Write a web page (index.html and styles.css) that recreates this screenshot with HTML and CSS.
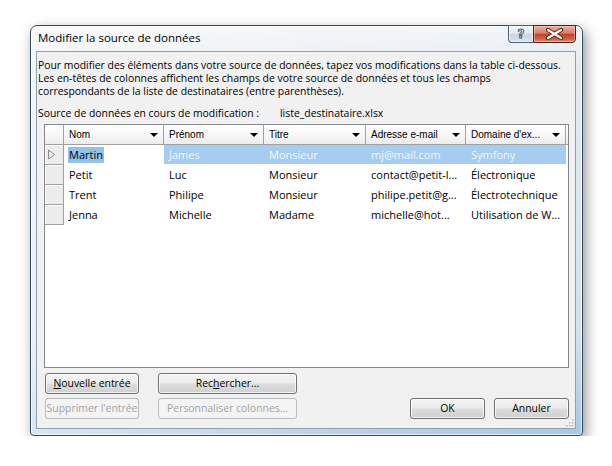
FILE: index.html
```html
<!DOCTYPE html>
<html lang="fr">
<head>
<meta charset="utf-8">
<title>Modifier la source de données</title>
<link rel="stylesheet" href="styles.css">
</head>
<body>
<div class="window">
  <div class="titlebar">
    <span class="title">Modifier la source de données</span>
    <div class="caption">
      <div class="cbtn help"><span>?</span></div>
      <div class="cbtn close">
        <svg width="41" height="16" viewBox="0 0 41 16">
          <path d="M14 4 L27 12 M27 4 L14 12" stroke="#5a1e14" stroke-width="4.4" stroke-linecap="round"/>
          <path d="M14 4 L27 12 M27 4 L14 12" stroke="#ffffff" stroke-width="2.4" stroke-linecap="round"/>
        </svg>
      </div>
    </div>
  </div>
  <div class="client">
    <p class="intro">Pour modifier des éléments dans votre source de données, tapez vos modifications dans la table ci-dessous.<br>Les en-têtes de colonnes affichent les champs de votre source de données et tous les champs<br>correspondants de la liste de destinataires (entre parenthèses).</p>
    <div class="source"><span class="label">Source de données en cours de modification :</span><span class="file">liste_destinataire.xlsx</span></div>
    <div class="grid">
      <div class="row head">
        <div class="rh"></div>
        <div class="hc c1"><span>Nom</span><i class="arr"></i></div>
        <div class="hc c2"><span>Prénom</span><i class="arr"></i></div>
        <div class="hc c3"><span>Titre</span><i class="arr"></i></div>
        <div class="hc c4"><span>Adresse e-mail</span><i class="arr"></i></div>
        <div class="hc c5"><span>Domaine d'ex...</span><i class="arr"></i></div>
      </div>
      <div class="row">
        <div class="rh"><svg width="9" height="11" viewBox="0 0 9 11"><path d="M1.5 1 L7.5 5.5 L1.5 10 Z" fill="none" stroke="#8c8c8c" stroke-width="1"/></svg></div>
        <div class="dc c1"><span class="hl">Martin</span></div>
        <div class="dc c2 sel">James</div>
        <div class="dc c3 sel">Monsieur</div>
        <div class="dc c4 sel">mj@mail.com</div>
        <div class="dc c5 sel">Symfony</div>
      </div>
      <div class="row">
        <div class="rh"></div>
        <div class="dc c1">Petit</div>
        <div class="dc c2">Luc</div>
        <div class="dc c3">Monsieur</div>
        <div class="dc c4">contact@petit-l...</div>
        <div class="dc c5">Électronique</div>
      </div>
      <div class="row">
        <div class="rh"></div>
        <div class="dc c1">Trent</div>
        <div class="dc c2">Philipe</div>
        <div class="dc c3">Monsieur</div>
        <div class="dc c4">philipe.petit@g...</div>
        <div class="dc c5">Électrotechnique</div>
      </div>
      <div class="row">
        <div class="rh"></div>
        <div class="dc c1">Jenna</div>
        <div class="dc c2">Michelle</div>
        <div class="dc c3">Madame</div>
        <div class="dc c4">michelle@hot...</div>
        <div class="dc c5">Utilisation de W...</div>
      </div>
    </div>
    <div class="actions">
      <div class="left">
        <button class="btn"><u>N</u>ouvelle entrée</button>
        <button class="btn">Rec<u>h</u>ercher...</button>
        <button class="btn" disabled>Supprimer l'entrée</button>
        <button class="btn" disabled>Personnaliser colonnes...</button>
      </div>
      <div class="right">
        <button class="btn">OK</button>
        <button class="btn">Annuler</button>
      </div>
    </div>
    <svg class="grip" width="9" height="9" viewBox="0 0 9 9">
      <g fill="#a9b4be">
        <rect x="7" y="1" width="1.5" height="1.5"/>
        <rect x="4" y="4" width="1.5" height="1.5"/>
        <rect x="7" y="4" width="1.5" height="1.5"/>
        <rect x="1" y="7" width="1.5" height="1.5"/>
        <rect x="4" y="7" width="1.5" height="1.5"/>
        <rect x="7" y="7" width="1.5" height="1.5"/>
      </g>
    </svg>
  </div>
</div>
</body>
</html>
```
FILE: styles.css
```css
* { box-sizing: border-box; }

body {
  margin: 0;
  background: #ffffff;
  font-family: "Open Sans", "Noto Sans", sans-serif;
  color: #000;
}

.window {
  width: 553px;
  height: 411px;
  margin: 25px 0 0 30px;
  padding: 0 6px 6px 5px;
  display: flex;
  flex-direction: column;
  border: 1px solid #34485e;
  border-radius: 7px 7px 4px 4px;
  background:
    linear-gradient(90deg, rgba(255,255,255,0.55) 0%, rgba(255,255,255,0.15) 60%, rgba(255,255,255,0) 100%),
    linear-gradient(180deg, #f2f5f8 0%, #e4ebf1 40px, #d3e1ee 75%, #a9c8e3 100%);
  box-shadow: 3px 5px 13px rgba(0,0,0,0.42), inset 0 0 0 1px rgba(255,255,255,0.7);
}

.titlebar {
  height: 25px;
  display: flex;
  align-items: flex-start;
  flex: none;
}

.title {
  font-size: 11.5px;
  line-height: 16px;
  padding: 4px 0 0 2px;
  white-space: nowrap;
}

.caption {
  margin-left: auto;
  margin-top: -1px;
  display: flex;
}

.cbtn {
  height: 18px;
  display: flex;
  align-items: center;
  justify-content: center;
}

.help {
  width: 25px;
  border: 1px solid #4f6072;
  border-right: none;
  border-radius: 0 0 0 4px;
  background: linear-gradient(180deg, #f4f7fa 0%, #e2e9ef 45%, #cbd6e0 50%, #d9e2ea 100%);
  box-shadow: inset 0 0 0 1px rgba(255,255,255,0.6);
}

.help span {
  font-family: "DejaVu Sans", sans-serif;
  font-weight: bold;
  font-size: 12px;
  line-height: 14px;
  color: #eef2f6;
  -webkit-text-stroke: 0.9px #4d5b69;
}

.close {
  width: 43px;
  border: 1px solid #4e2219;
  border-radius: 0 0 4px 0;
  background: linear-gradient(180deg, #eab1a4 0%, #db7d68 45%, #c4432a 52%, #cf5f45 80%, #e0907a 100%);
  box-shadow: inset 0 0 0 1px rgba(255,220,210,0.45);
}

.client {
  position: relative;
  height: 378px;
  border: 1px solid #8e9fb0;
  background: #f1f1f1;
  display: flex;
  flex-direction: column;
  font-size: 10.4px;
}

.intro {
  margin: 7px 0 0 0;
  padding-left: 1px;
  line-height: 13px;
  white-space: nowrap;
}

.source {
  margin-top: 9px;
  padding-left: 1px;
  line-height: 13px;
  display: flex;
  white-space: nowrap;
}

.source .label {
  width: 242px;
  flex: none;
}

.grid {
  margin: 4px 6px 0 7px;
  height: 244px;
  flex: none;
  border: 1px solid #828790;
  background: #ffffff;
}

.row {
  display: flex;
  height: 20px;
}

.rh {
  width: 19px;
  flex: none;
  background: #ececec;
  border-right: 1px solid #a0a0a0;
  border-bottom: 1px solid #a0a0a0;
  box-shadow: inset 1px 1px 0 #ffffff;
  display: flex;
  align-items: center;
  padding-left: 2px;
}

.c1, .c2, .c4, .c5 { width: 100px; flex: none; }
.c3 { width: 102px; flex: none; }

.head {
  background: linear-gradient(180deg, #ffffff 0%, #f6f6f6 60%, #ececec 100%);
  border-bottom: 1px solid #a0a0a0;
}

.head .rh {
  background: transparent;
  border-bottom: none;
  box-shadow: none;
}

.hc {
  display: flex;
  align-items: center;
  padding-left: 5px;
  border-right: 1px solid #a0a0a0;
  font-family: "Liberation Sans", Arial, sans-serif;
  font-size: 10px;
  white-space: nowrap;
}

.arr {
  margin-left: auto;
  margin-right: 5px;
  width: 0;
  height: 0;
  border-left: 4px solid transparent;
  border-right: 4px solid transparent;
  border-top: 4px solid #000;
}

.dc {
  font-size: 11px;
  line-height: 20px;
  padding-left: 5px;
  white-space: nowrap;
  overflow: hidden;
}

.sel {
  background: #a6ccf0;
  color: #f1f7fd;
  height: 19px;
  line-height: 19px;
}

.hl {
  display: inline-block;
  background: #92c1ec;
  line-height: 16px;
  margin-left: -1px;
  padding: 0 1px;
}

.actions {
  display: flex;
  margin-top: 5px;
  padding: 0 6px 0 8px;
}

.left {
  display: grid;
  grid-template-columns: 94px 139px;
  column-gap: 19px;
  row-gap: 4px;
}

.right {
  margin-left: auto;
  align-self: flex-end;
  display: flex;
  gap: 9px;
}

.right .btn { width: 75px; }

.btn {
  height: 21px;
  padding: 0;
  font-family: "Open Sans", "Noto Sans", sans-serif;
  font-size: 10.4px;
  line-height: 19px;
  color: #000;
  border: 1px solid #707070;
  border-radius: 3px;
  background: linear-gradient(180deg, #f3f3f3 0%, #ebebeb 48%, #dddddd 52%, #d0d0d0 100%);
  box-shadow: inset 0 0 0 1px rgba(255,255,255,0.75);
  white-space: nowrap;
}

.btn:disabled {
  color: #a3a3a3;
  border-color: #b7bcc0;
  background: #f4f4f4;
  box-shadow: none;
}

.btn u { text-underline-offset: 1px; }

.grip {
  position: absolute;
  right: 1px;
  bottom: 1px;
}
```
